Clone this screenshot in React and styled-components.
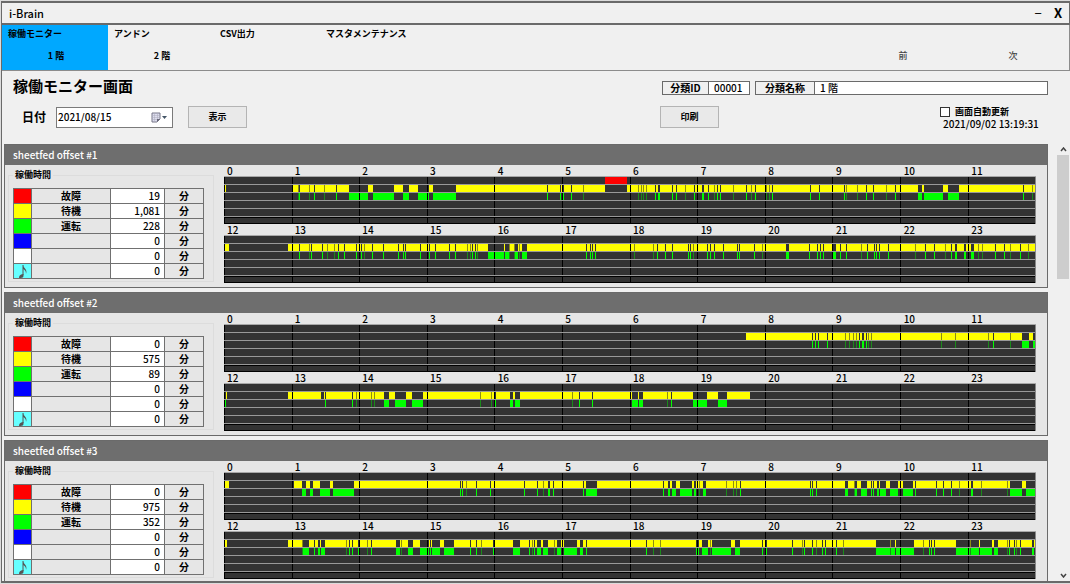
import React from "react";
import styled, { createGlobalStyle } from "styled-components";

const GlobalStyle = createGlobalStyle`
  * {
    box-sizing: border-box;
  }

  body {
    margin: 0;
    background: #f0f0f0;
    color: #000;
    font-family: "Noto Sans CJK JP", "Noto Sans", sans-serif;
    font-size: 10px;
    font-weight: 500;
    line-height: 12px;
  }

  button,
  input {
    margin: 0;
    padding: 0;
    border: none;
    border-radius: 0;
    background: none;
    color: inherit;
    font: inherit;
  }
`

const Window = styled.div`
  display: flex;
  flex-direction: column;
  height: 100vh;
  padding: 1px 0 1px 1px;
  background: #dcdcdc;
`

const Frame = styled.div`
  flex: 1;
  min-height: 0;
  display: flex;
  flex-direction: column;
  border: 1px solid #6a6a6a;
  border-right: none;
  border-width: 2px 0 2px 1px;
  background: #f0f0f0;
`

const TitleBar = styled.header`
  display: flex;
  align-items: center;
  height: 22px;
  padding: 0 1px 0 7px;
  border-bottom: 2px solid #6a6a6a;
  border-right: 1px solid #6a6a6a;
`

const Title = styled.span`
  flex: 1;
  font-size: 11px;
`

const WindowButton = styled.button`
  width: 20px;
  font-size: 13px;
  font-weight: ${(props) => (props.$bold ? 700 : 400)};
  line-height: 18px;
`

const Nav = styled.nav`
  display: flex;
  flex-direction: column;
  height: 46px;
  border-bottom: 1px solid #8c8c8c;
  border-right: 1px solid #8c8c8c;
`

const NavRow = styled.div`
  display: flex;
  height: ${(props) => props.$height}px;
`

const MenuButton = styled.button`
  width: 106px;
  padding: 0 0 2px 6px;
  background: ${(props) => (props.$active ? "#00a8ff" : "none")};
  font-size: 9px;
  font-weight: 700;
  text-align: left;
  white-space: nowrap;
`

const FloorButton = styled.button`
  width: 106px;
  padding: 0 0 2px 2px;
  background: ${(props) => (props.$active ? "#00a8ff" : "none")};
  font-size: 9px;
  font-weight: 700;
`

const PageButton = styled.button`
  width: 110px;
  padding: 0 2px 2px 0;
  color: #444;
  font-size: 9px;
`

const Spacer = styled.div`
  flex: 1;
`

const Toolbar = styled.div`
  display: flex;
  justify-content: space-between;
  height: 73px;
  padding: 4px 22px 0 11px;
`

const Heading = styled.h1`
  margin: 0 0 9px;
  font-size: 15px;
  font-weight: 700;
  line-height: 22px;
`

const Line = styled.div`
  display: flex;
  align-items: center;
`

const DateLabel = styled.label`
  width: 43px;
  padding-left: 9px;
  font-size: 12px;
  font-weight: 700;
`

const DateBox = styled.div`
  display: flex;
  align-items: center;
  width: 117px;
  height: 21px;
  margin-right: 15px;
  padding: 0 4px 0 1px;
  border: 1px solid #7a7a7a;
  background: #fff;
`

const DateInput = styled.input`
  flex: 1;
  min-width: 0;
  outline: none;
`

const IconButton = styled.button`
  display: flex;
`

const Button = styled.button`
  width: 59px;
  height: 22px;
  border: 1px solid #b4b4b4;
  background: #e9e9e9;
  font-size: 9px;
  font-weight: 700;
`

const Info = styled.div`
  width: 388px;
  padding-top: 6px;
`

const Fields = styled.div`
  display: flex;
  gap: 5px;
  padding-left: 2px;
`

const Field = styled.div`
  display: flex;
  flex: ${(props) => (props.$grow ? 1 : "none")};
  height: 14px;
  border: 1px solid #6a6a6a;
  background: #fff;
`

const FieldLabel = styled.label`
  width: ${(props) => props.$width}px;
  border-right: 1px solid #6a6a6a;
  background: #f0f0f0;
  font-weight: 700;
  text-align: center;
`

const FieldInput = styled.input`
  flex: 1;
  width: ${(props) => props.$width}px;
  min-width: 0;
  padding: 0 5px;
  outline: none;
`

const Actions = styled.div`
  display: flex;
  justify-content: space-between;
  margin-top: 11px;
`

const Refresh = styled.div`
  width: 108px;
`

const CheckLabel = styled.label`
  display: flex;
  align-items: center;
  gap: 5px;
  font-size: 9px;
  font-weight: 700;
`

const Checkbox = styled.input`
  appearance: none;
  width: 10px;
  height: 10px;
  border: 1px solid #333;
  background: #fff;
`

const Clock = styled.div`
  padding-left: 3px;
  white-space: nowrap;
`

const Content = styled.div`
  flex: 1;
  min-height: 0;
  display: flex;
`

const List = styled.main`
  flex: 1;
  min-width: 0;
  overflow: hidden;
  padding: 0 9px 0 2px;
`

const ScrollBar = styled.div`
  display: flex;
  flex-direction: column;
  width: 13px;
  padding-right: 1px;
`

const ScrollButton = styled.button`
  display: flex;
  align-items: center;
  justify-content: center;
  height: 11px;
`

const Thumb = styled.div`
  height: 124px;
  background: #cdcdcd;
`

const Panel = styled.section`
  height: 144px;
  margin-bottom: 4px;
  border: 1px solid #6a6a6a;
  background: #e6e6e6;
`

const PanelTitle = styled.h2`
  height: 20px;
  margin: 0;
  padding: 0 8px;
  background: #6e6e6e;
  color: #fff;
  font-size: 10px;
  font-weight: 500;
  line-height: 20px;
`

const PanelBody = styled.div`
  display: flex;
  gap: 10px;
  padding-right: 11px;
`

const Group = styled.fieldset`
  flex: none;
  width: 206px;
  height: 113px;
  margin: 4px 0 0 3px;
  padding: 7px 0 0 4px;
  border: 1px solid #dcdcdc;
`

const Legend = styled.legend`
  padding: 0 2px;
  font-size: 9px;
  font-weight: 700;
`

const Table = styled.table`
  width: 191px;
  border-collapse: collapse;
  table-layout: fixed;
`

const Cell = styled.td`
  width: ${(props) => props.$width}px;
  height: 15px;
  padding: 0 4px;
  border: 1px solid #707070;
  background: ${(props) => props.$color || "#e6e6e6"};
  font-weight: ${(props) => (props.$number ? 500 : 700)};
  line-height: 14px;
  text-align: ${(props) => (props.$number ? "right" : "center")};
`

const Note = styled.svg`
  display: block;
`

const Timelines = styled.div`
  flex: 1;
  min-width: 0;
`

const Hours = styled.div`
  display: grid;
  grid-template-columns: repeat(12, 1fr);
  height: 11px;
  line-height: 11px;
`

const Hour = styled.span`
  padding-left: 3px;
`

const Chart = styled.svg`
  display: block;
  width: 100%;
  height: 48px;
  border-top: 1px solid #a8a8a8;
  background: #333;
`

// Positions are on an 812 unit axis that covers twelve hours.
// run: periods in operation, tick: short runs, dim: very short runs
const machines = [
  {
    name: "sheetfed offset #1",
    minutes: ["19", "1,081", "228", "0", "0", "0"],
    rows: [
      {
        fault: [[381, 403]],
        wait: [[0, 2], [68, 812]],
        run: [[125, 144], [149, 170], [179, 185], [194, 205], [209, 232], [434, 436], [478, 480], [694, 698], [700, 719], [724, 735]],
        tick: [75, 90, 112, 323, 336, 339, 347, 431, 448, 452, 470, 484, 493, 496, 522, 531, 548, 586, 595, 620, 642, 649, 671, 799],
        dim: [74, 85, 100, 359, 414, 417, 419, 422, 461, 490, 509, 527, 542, 545, 622, 633, 662, 808],
      },
      {
        wait: [[0, 5], [64, 812]],
        run: [[264, 280], [281, 285], [291, 294], [298, 303], [562, 565], [609, 612], [731, 733], [740, 742], [747, 750]],
        tick: [75, 87, 98, 114, 120, 132, 137, 148, 159, 174, 179, 181, 196, 205, 211, 225, 231, 248, 251, 362, 366, 368, 371, 433, 441, 448, 464, 466, 483, 486, 490, 499, 513, 515, 530, 585, 593, 596, 599, 616, 622, 643, 650, 652, 655, 664, 701, 710, 727, 771, 780, 796],
        dim: [85, 103, 110, 140, 243, 246, 253, 285, 290, 295, 410, 429, 469, 538, 637, 691, 721, 754, 758, 786, 804],
      },
    ],
  },
  {
    name: "sheetfed offset #2",
    minutes: ["0", "575", "89", "0", "0", "0"],
    rows: [
      {
        wait: [[522, 812]],
        run: [[638, 640], [798, 805], [809, 811]],
        tick: [588, 591, 594, 603, 635, 642, 769],
        dim: [621, 625, 629, 632, 644, 647, 717, 731, 764, 786],
      },
      {
        wait: [[2, 3], [64, 97], [100, 526]],
        run: [[0, 2], [160, 165], [171, 182], [188, 199], [286, 289], [291, 296], [408, 414], [415, 419], [469, 483], [494, 503]],
        tick: [101, 128, 271, 355, 368, 447],
        dim: [132, 147, 150, 256, 267, 348, 443],
      },
    ],
  },
  {
    name: "sheetfed offset #3",
    minutes: ["0", "975", "352", "0", "0", "0"],
    rows: [
      {
        wait: [[0, 5], [70, 812]],
        run: [[78, 82], [86, 89], [96, 106], [109, 130], [324, 326], [362, 373], [444, 446], [448, 452], [456, 468], [470, 472], [479, 482], [621, 624], [631, 633], [637, 643], [653, 655], [656, 662], [666, 674], [679, 689], [747, 749], [786, 798], [802, 812]],
        tick: [236, 238, 252, 266, 300, 313, 329, 359, 439, 516, 586, 588, 592, 647, 649, 691, 712, 719, 727],
        dim: [242, 319, 475, 502, 509, 512, 630, 735, 757, 783],
      },
      {
        wait: [[1, 3], [64, 812]],
        run: [[0, 1], [79, 85], [94, 96], [97, 101], [172, 176], [184, 189], [196, 205], [208, 216], [220, 230], [289, 296], [313, 317], [319, 324], [333, 337], [340, 353], [356, 359], [478, 484], [488, 507], [511, 516], [541, 543], [652, 666], [667, 671], [672, 690], [732, 746], [747, 755], [756, 768], [770, 774], [808, 810]],
        tick: [90, 125, 128, 134, 147, 206, 246, 252, 269, 305, 310, 362, 422, 472, 474, 538, 568, 580, 588, 598, 601, 612, 705, 707, 710, 785, 790, 796],
        dim: [78, 122, 143, 177, 257, 308, 330, 429, 436, 486, 578, 592, 619, 666, 699, 746, 783, 792, 811],
      },
    ],
  },
]

const statuses = [
  { label: "故障", color: "#ff0000" },
  { label: "待機", color: "#ffff00" },
  { label: "運転", color: "#00ff00" },
  { label: "", color: "#0000ff" },
  { label: "", color: "#ffffff" },
  { label: "", color: "#66ffff", note: true },
]

const Timeline = ({ start, fault = [], wait, run, tick, dim }) => {
  const runs = [...run, ...tick.map((x) => [x, x + 1])]
  const hours = Array.from({ length: 12 }, (_, i) => i)

  return (
    <>
      <Hours>
        {hours.map((hour) => <Hour key={hour}>{start + hour}</Hour>)}
      </Hours>
      <Chart viewBox="0 0 812 47" preserveAspectRatio="none" shapeRendering="crispEdges">
        {fault.map(([from, to]) => <rect key={from} x={from} y="0" width={to - from} height="7" fill="#f00" />)}
        {wait.map(([from, to]) => <rect key={from} x={from} y="8" width={to - from} height="7" fill="#ff0" />)}
        {fault.map(([from, to]) => <rect key={from} x={from} y="8" width={to - from} height="7" fill="#333" />)}
        {dim.map((x) => (
          <g key={x}>
            <rect x={x} y="8" width="1" height="7" fill="#8c8c14" />
            <rect x={x} y="16" width="1" height="7" fill="#1a8a1a" />
          </g>
        ))}
        {runs.map(([from, to]) => (
          <g key={from}>
            <rect x={from} y="8" width={to - from} height="7" fill="#333" />
            <rect x={from} y="16" width={to - from} height="7" fill="#0f0" />
          </g>
        ))}
        {hours.map((hour) => (
          <rect key={hour} x={Math.round(hour * 67.6)} y="0" width="1" height="47" fill="#000" />
        ))}
        {[7, 15, 23, 31, 39].map((y) => (
          <rect key={y} x="0" y={y} width="812" height="1" fill="#999" />
        ))}
        <rect x="0" y="40" width="812" height="1" fill="#000" />
        <rect x="0" y="46" width="812" height="1" fill="#000" />
        <rect x="811" y="0" width="1" height="47" fill="#888" />
      </Chart>
    </>
  )
}

const Machine = ({ name, minutes, rows }) => (
  <Panel>
    <PanelTitle>{name}</PanelTitle>
    <PanelBody>
      <Group>
        <Legend>稼働時間</Legend>
        <Table>
          <tbody>
            {statuses.map((status, i) => (
              <tr key={status.color}>
                <Cell $width={18} $color={status.color}>
                  {status.note && (
                    <Note width="10" height="14" viewBox="0 0 10 14">
                      <path d="M5 1v10" fill="none" stroke="#555" />
                      <path d="M5 1c0 3 5 4 3 9c0-3-1-4-3-5z" fill="#555" />
                      <path d="M5.500 10v2c0 1-1 2-3 2H1c0-3 2-4 4.500-4z" fill="#555" />
                    </Note>
                  )}
                </Cell>
                <Cell $width={79}>{status.label}</Cell>
                <Cell $width={54} $color="#fff" $number>{minutes[i]}</Cell>
                <Cell $width={39}>分</Cell>
              </tr>
            ))}
          </tbody>
        </Table>
      </Group>
      <Timelines>
        <Timeline start={0} {...rows[0]} />
        <Timeline start={12} {...rows[1]} />
      </Timelines>
    </PanelBody>
  </Panel>
)

const App = () => {
  return (
    <Window>
      <GlobalStyle />
      <Frame>
        <TitleBar>
          <Title>i-Brain</Title>
          <WindowButton>−</WindowButton>
          <WindowButton $bold>X</WindowButton>
        </TitleBar>
        <Nav>
          <NavRow $height={19}>
            <MenuButton $active>稼働モニター</MenuButton>
            <MenuButton>アンドン</MenuButton>
            <MenuButton>CSV出力</MenuButton>
            <MenuButton>マスタメンテナンス</MenuButton>
          </NavRow>
          <NavRow $height={26}>
            <FloorButton $active>1 階</FloorButton>
            <FloorButton>2 階</FloorButton>
            <Spacer />
            <PageButton>前</PageButton>
            <PageButton>次</PageButton>
          </NavRow>
        </Nav>
        <Toolbar>
          <div>
            <Heading>稼働モニター画面</Heading>
            <Line>
              <DateLabel htmlFor="date">日付</DateLabel>
              <DateBox>
                <DateInput id="date" defaultValue="2021/08/15" />
                <IconButton aria-label="カレンダー">
                  <svg width="17" height="11" viewBox="0 0 17 11">
                    <path d="M1 1h8v6l-3 3H1z" fill="#dde" stroke="#778" />
                    <path d="M1 3.500h8M1 5.500h8M1 7.500h6M3.500 1v9M6.500 1v9" stroke="#aab" strokeWidth="0.500" />
                    <path d="M9 7H6v3z" fill="#667" />
                    <path d="M11 4h5l-2.500 3z" fill="#456" />
                  </svg>
                </IconButton>
              </DateBox>
              <Button>表示</Button>
            </Line>
          </div>
          <Info>
            <Fields>
              <Field>
                <FieldLabel htmlFor="group-id" $width={46}>分類ID</FieldLabel>
                <FieldInput id="group-id" defaultValue="00001" $width={40} />
              </Field>
              <Field $grow>
                <FieldLabel htmlFor="group-name" $width={59}>分類名称</FieldLabel>
                <FieldInput id="group-name" defaultValue="1 階" $width={40} />
              </Field>
            </Fields>
            <Actions>
              <Button>印刷</Button>
              <Refresh>
                <CheckLabel>
                  <Checkbox type="checkbox" />
                  画面自動更新
                </CheckLabel>
                <Clock>2021/09/02 13:19:31</Clock>
              </Refresh>
            </Actions>
          </Info>
        </Toolbar>
        <Content>
          <List>
            {machines.map((machine) => <Machine key={machine.name} {...machine} />)}
          </List>
          <ScrollBar>
            <ScrollButton aria-label="上へ">
              <svg width="7" height="5" viewBox="0 0 7 5">
                <path d="M1 4l2.500-3L6 4" fill="none" stroke="#444" strokeWidth="1.500" />
              </svg>
            </ScrollButton>
            <Thumb />
            <Spacer />
            <ScrollButton aria-label="下へ">
              <svg width="7" height="5" viewBox="0 0 7 5">
                <path d="M1 1l2.500 3L6 1" fill="none" stroke="#444" strokeWidth="1.500" />
              </svg>
            </ScrollButton>
          </ScrollBar>
        </Content>
      </Frame>
    </Window>
  )
}

export default App;
